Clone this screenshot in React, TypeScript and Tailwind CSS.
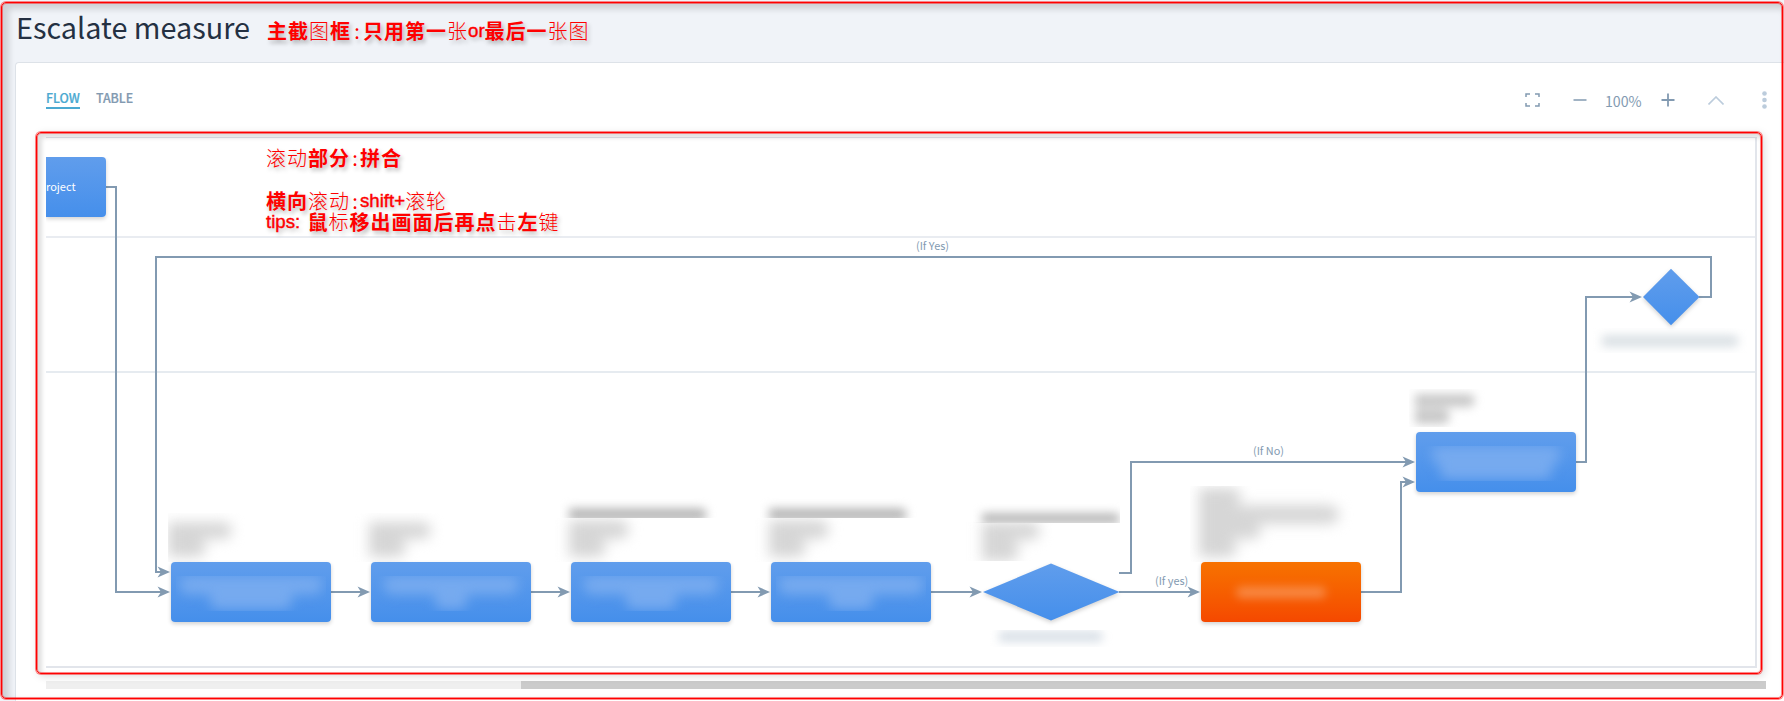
import React from "react";

const cjk = "font-['Noto_Sans_CJK_SC','Noto_Sans',sans-serif]";

/* Annotation text: "*" toggles bold weight, "~" toggles the Latin face. */
function Note({ text, colon = "w-[10px]" }: { text: string; colon?: string }) {
  const parts = text.split(/(\*[^*]*\*|~[^~]*~|:)/).filter(Boolean);
  return (
    <div className="flex h-[21px] whitespace-pre leading-[21px] text-[#ff0000] [text-shadow:2px_3px_4px_rgba(0,0,0,0.28)]">
      {parts.map((p, i) => {
        if (p === ":")
          return <span key={i} className={`${cjk} ${colon} text-center text-[20px]`}>:</span>;
        if (p[0] === "*")
          return <span key={i} className={`${cjk} text-[20px] font-bold tracking-[1px]`}>{p.slice(1, -1)}</span>;
        if (p[0] === "~")
          return <span key={i} className="font-['Liberation_Sans',sans-serif] text-[18.67px] [-webkit-text-stroke:0.4px_#ff0000]">{p.slice(1, -1)}</span>;
        return <span key={i} className={`${cjk} text-[20px] font-light tracking-[1px]`}>{p}</span>;
      })}
    </div>
  );
}

const blue = "bg-linear-to-b from-[#609dec] to-[#458feb]";
const orange = "bg-linear-to-b from-[#f77200] to-[#f54800]";

function Node({ className, children }: { className: string; children?: React.ReactNode }) {
  return (
    <div className={`absolute flex h-[60px] w-[160px] flex-col items-center rounded-[4px] shadow-[0_2px_4px_rgba(0,0,0,0.18)] ${className}`}>
      {children}
    </div>
  );
}

/* Redacted title inside a step: one wide and one short line. */
function Hidden({ first, second }: { first: string; second?: string }) {
  return (
    <div className="mt-[14px] flex h-[35px] w-[150px] flex-col items-center overflow-hidden">
      <div className="flex flex-col items-center blur-[6px]">
        <div className={`h-[18px] rounded-lg bg-[#76aaef] ${first}`} />
        {second && <div className={`h-[15px] rounded-b-lg bg-[#76aaef] ${second}`} />}
      </div>
    </div>
  );
}

/* Redacted caption above a step: left-aligned lines of varying widths. */
function Caption({ className, lines, blur = "blur-[6.5px]" }: { className: string; lines: string[]; blur?: string }) {
  return (
    <div className={`absolute flex flex-col items-start overflow-hidden ${className}`}>
      <div className={`flex flex-col items-start ${blur}`}>
        {lines.map((l, i) => <div key={i} className={`shrink-0 rounded-r-full ${l}`} />)}
      </div>
    </div>
  );
}

const soft = "bg-[#d6d6d6]";
const strong = "bg-[#b9b9b9]";

const arrows: [number, number][] = [
  [170, 592], [170, 572], [370, 592], [570, 592], [770, 592], [982, 592],
  [1200, 592], [1415, 462], [1415, 482], [1642, 297],
];

function Connectors() {
  return (
    <svg className="absolute left-0 top-0" width="1784" height="701" viewBox="0 0 1784 701">
      <defs>
        <linearGradient id="d" x1="0" y1="0" x2="0" y2="1">
          <stop offset="0" stopColor="#609dec" />
          <stop offset="1" stopColor="#458feb" />
        </linearGradient>
      </defs>
      <g fill="none" stroke="#829ab1" strokeWidth="2">
        <path d="M106 187H116V592H162" />
        <path d="M1699 297H1711V257H156V572H162" />
        <path d="M331 592H362M531 592H562M731 592H762M931 592H974M1119 592H1192" />
        <path d="M1119 573H1131V462H1407" />
        <path d="M1361 592H1401V482H1407" />
        <path d="M1576 462H1586V297H1634" />
      </g>
      {arrows.map(([x, y]) => (
        <path key={`${x}-${y}`} d={`M${x} ${y}l-12.5 -5.5l3.5 5.5l-3.5 5.5z`} fill="#829ab1" />
      ))}
      <g fill="url(#d)" className="[filter:drop-shadow(0_2px_2px_rgba(0,0,0,0.18))]">
        <path d="M983 592L1051 563.5L1119.500 592L1051 620.500Z" />
        <path d="M1643 297L1671 268.800L1699.500 297L1671 325.200Z" />
      </g>
    </svg>
  );
}

export default function App() {
  return (
    <div className={`relative h-[701px] w-[1784px] overflow-hidden bg-[#f0f3f8] ${cjk}`}>
      <div className="flex h-full flex-col">
        <header className="flex h-[62px] shrink-0 items-center gap-[17px] pb-[6px] pl-[16px]">
          <h1 className="mb-[2px] w-[234px] whitespace-nowrap text-[28.8px] leading-[32px] text-[#243042]">Escalate measure</h1>
          <div className="mt-[5px]">
            <Note colon="w-[12px]" text="*主截*图*框*:*只用第一*张~or~*最后一*张图" />
          </div>
        </header>
        <main className="ml-[15px] flex-1 rounded-tl-[4px] border-l border-t border-[#dde2e8] bg-white pl-[30px]">
          <div className="flex h-[74px] items-center">
            <nav className="mb-[3px] flex gap-[16px] text-[12.400px] font-medium leading-[18px] text-[#829ab1] [-webkit-text-stroke:0.2px_currentColor]">
              <span className="border-b-2 border-[#4ba9d1] text-[#4ba9d1]">FLOW</span>
              <span>TABLE</span>
            </nav>
            <div className="ml-auto flex items-center text-[#829ab1]">
              <svg width="15" height="14" viewBox="0 0 15 14" className="mr-[33px]" fill="none" stroke="currentColor" strokeWidth="1.500">
                <path d="M1 4V1H5M10 1H14V4M14 10V13H10M5 13H1V10" />
              </svg>
              <svg width="14" height="14" viewBox="0 0 14 14" className="mr-[18px]" stroke="currentColor" strokeWidth="1.500"><path d="M0.500 7H13.500" /></svg>
              <span className="mr-[19px] w-[37px] pt-[2px] text-[14.200px] leading-[20px]">100%</span>
              <svg width="14" height="14" viewBox="0 0 14 14" className="mr-[33px]" stroke="currentColor" strokeWidth="1.800"><path d="M0.500 7H13.500M7 0.500V13.500" /></svg>
              <svg width="16" height="9" viewBox="0 0 16 9" className="mr-[38px]" fill="none" stroke="#bcccdc" strokeWidth="1.600"><path d="M0.500 8.500L8 1L15.500 8.500" /></svg>
              <svg width="5" height="18" viewBox="0 0 5 18" className="mr-[17px]" fill="#bcccdc"><circle cx="2.500" cy="2.500" r="2.300" /><circle cx="2.500" cy="9" r="2.300" /><circle cx="2.500" cy="15.500" r="2.300" /></svg>
            </div>
          </div>
          <section className="flex h-[531px] w-[1711px] flex-col border-b-2 border-r-2 border-t border-[#e2e5eb]">
            <div className="h-[100px] border-b-2 border-[#e9ecf1] pl-[220px] pt-[9px]">
              <Note text="滚动*部分*:*拼合*" />
              <div className="h-[22px]" />
              <Note text="*横向*滚动:~shift+~滚轮" />
              <div className="flex h-[21px] gap-[2px]">
                <Note text="~tips: ~" />
                <Note text="*鼠*标*移出画面后再点*击*左*键" />
              </div>
            </div>
            <div className="h-[135px] border-b-2 border-[#e6ebf0]" />
            <div className="flex-1" />
          </section>
          <div className="mt-[13px] flex h-[8px] w-[1720px] bg-[#efefef]">
            <div className="ml-auto w-[1245px] bg-[#cbcbcb]" />
          </div>
        </main>
      </div>

      <Caption className="left-[168px] top-[513px] h-[49px] w-[90px] pt-[9px]" lines={[`h-[17px] w-[64px] ${soft}`, `h-[18px] w-[38px] ${soft}`]} />
      <Caption className="left-[350px] top-[513px] h-[49px] w-[108px] pl-[19px] pt-[9px]" lines={[`h-[17px] w-[62px] ${soft}`, `h-[18px] w-[37px] ${soft}`]} />
      <Caption className="left-[555px] top-[494px] h-[24px] w-[170px] pl-[14px] pt-[14px]" blur="blur-[5px]" lines={[`h-[13px] w-[138px] ${strong}`]} />
      <Caption className="left-[555px] top-[518px] h-[44px] w-[108px] pl-[14px] pt-[2px]" lines={[`h-[19px] w-[60px] ${soft}`, `h-[18px] w-[37px] ${soft}`]} />
      <Caption className="left-[755px] top-[494px] h-[24px] w-[170px] pl-[14px] pt-[14px]" blur="blur-[5px]" lines={[`h-[13px] w-[138px] ${strong}`]} />
      <Caption className="left-[755px] top-[518px] h-[44px] w-[108px] pl-[14px] pt-[2px]" lines={[`h-[19px] w-[60px] ${soft}`, `h-[18px] w-[37px] ${soft}`]} />
      <Caption className="left-[965px] top-[500px] h-[23px] w-[155px] pl-[17px] pt-[13px]" blur="blur-[5px]" lines={[`h-[11px] w-[138px] ${strong}`]} />
      <Caption className="left-[965px] top-[522px] h-[39px] w-[155px] pl-[17px]" lines={[`h-[18px] w-[58px] ${soft}`, `h-[21px] w-[37px] ${soft}`]} />
      <Caption className="left-[1190px] top-[486px] h-[76px] w-[170px] pl-[9px] pt-[2px]" lines={[`h-[17px] w-[42px] ${soft}`, `h-[19px] w-[140px] ${soft}`, `h-[15px] w-[62px] ${soft}`, `h-[18px] w-[38px] ${soft}`]} />
      <Caption className="left-[1409px] top-[389px] h-[38px] w-[90px] pl-[6px] pt-[5px]" blur="blur-[5px]" lines={["h-[13px] w-[60px] bg-[#c9c9c9]", "mt-[2px] h-[15px] w-[35px] bg-[#c9c9c9]"]} />
      <Caption className="left-[985px] top-[630px] h-[17px] w-[132px] pl-[14px] pt-px" blur="blur-[5px]" lines={["h-[11px] w-[104px] bg-[#d9e0e7]"]} />
      <Caption className="left-[1592px] top-[328px] h-[25px] w-[155px] pl-[10px] pt-[7px]" blur="blur-[5px]" lines={["h-[12px] w-[137px] bg-[#dbe1e5]"]} />

      <Connectors />

      <div className={`absolute left-[46px] top-[157px] flex h-[60px] w-[60px] items-center rounded-r-[4px] pb-[2px] text-[11px] text-white shadow-[0_2px_4px_rgba(0,0,0,0.18)] [clip-path:inset(0_-6px_-8px_0)] ${blue}`}>roject</div>

      <Node className={`left-[171px] top-[562px] ${blue}`}><Hidden first="w-[142px]" second="w-[82px]" /></Node>
      <Node className={`left-[371px] top-[562px] ${blue}`}><Hidden first="w-[134px]" second="w-[32px]" /></Node>
      <Node className={`left-[571px] top-[562px] ${blue}`}><Hidden first="w-[134px]" second="w-[50px]" /></Node>
      <Node className={`left-[771px] top-[562px] ${blue}`}><Hidden first="w-[144px]" second="w-[44px]" /></Node>
      <Node className={`left-[1201px] top-[562px] justify-center ${orange}`}>
        <div className="h-[11px] w-[90px] rounded-full bg-white/28 blur-[5px]" />
      </Node>
      <Node className={`left-[1416px] top-[432px] ${blue}`}><Hidden first="w-[128px]" second="w-[112px]" /></Node>

      <span className="absolute left-[916px] top-[236px] text-[10.900px] leading-[18px] text-[#829ab1]">(If Yes)</span>
      <span className="absolute left-[1253px] top-[441px] text-[10.900px] leading-[18px] text-[#829ab1]">(If No)</span>
      <span className="absolute left-[1155px] top-[571px] text-[10.900px] leading-[18px] text-[#829ab1]">(If yes)</span>

      <div className="pointer-events-none absolute left-[1px] top-[2px] h-[697px] w-[1782px] rounded-[5px] border border-[#ff0000] shadow-[0_0_0_1px_rgba(255,0,0,0.45),inset_0_0_0_1px_rgba(255,0,0,0.45),inset_5px_4px_6px_2px_rgba(0,0,0,0.14)]" />
      <div className="pointer-events-none absolute left-[36px] top-[132px] h-[542px] w-[1726px] rounded-[5px] border border-[#ff0000] shadow-[0_0_0_1px_rgba(255,0,0,0.45),inset_0_0_0_1px_rgba(255,0,0,0.45),inset_3px_3px_4px_2px_rgba(0,0,0,0.12),2px_2px_8px_rgba(0,0,0,0.15)]" />
    </div>
  );
}
